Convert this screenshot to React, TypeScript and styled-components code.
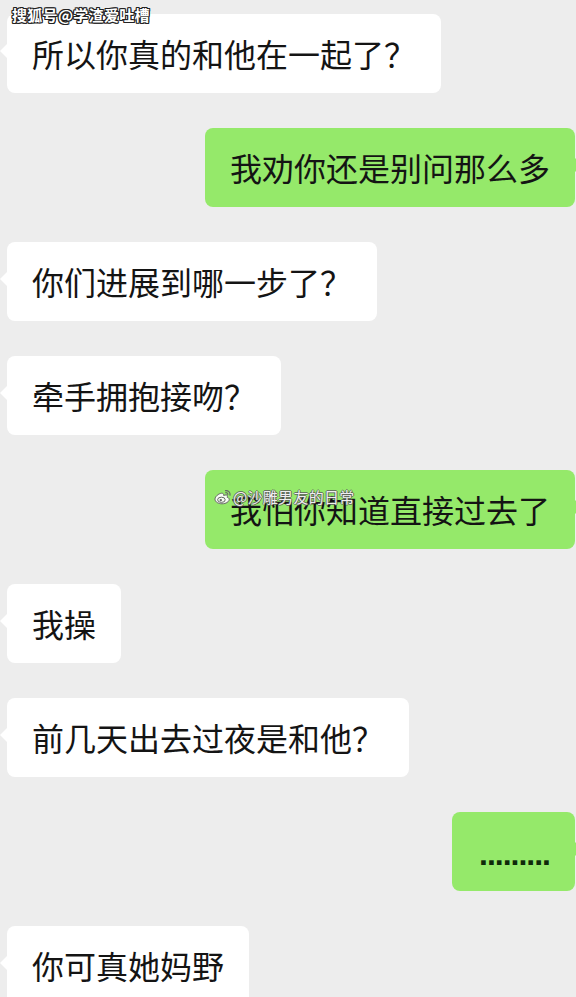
import React from "react";
import styled, { createGlobalStyle } from "styled-components";

const Global = createGlobalStyle`
  html, body { margin: 0; padding: 0; background: #ededed; }
  #root { width: 576px; height: 997px; overflow: hidden; }
`;

const Screen = styled.div`
  position: relative;
  width: 576px;
  height: 997px;
  overflow: hidden;
  background: #ededed;
  font-family: "Noto Sans CJK SC", "Noto Sans", sans-serif;
`;

const List = styled.div`
  display: flex;
  flex-direction: column;
  gap: 35px;
  padding-top: 14px;
`;

const Row = styled.div<{ $mine?: boolean }>`
  display: flex;
  justify-content: ${(p) => (p.$mine ? "flex-end" : "flex-start")};
  padding: ${(p) => (p.$mine ? "0 1px 0 0" : "0 0 0 7px")};
`;

const Bubble = styled.div<{ $mine?: boolean }>`
  position: relative;
  box-sizing: border-box;
  height: 79px;
  padding: 19px 25px;
  border-radius: 8px;
  background: ${(p) => (p.$mine ? "#95e96a" : "#ffffff")};
  color: #141414;
  font-size: 32px;
  line-height: 41px;
  white-space: nowrap;

  &::before {
    content: "";
    position: absolute;
    top: 30px;
    ${(p) => (p.$mine ? "right: -7px;" : "left: -7px;")}
    border-top: 7px solid transparent;
    border-bottom: 7px solid transparent;
    ${(p) =>
      p.$mine
        ? "border-left: 7px solid #95e96a;"
        : "border-right: 7px solid #ffffff;"}
  }
`;

const Dots = styled.span`
  font-family: "Liberation Sans", sans-serif;
  font-weight: 700;
  color: #0f2a0a;
  letter-spacing: -1px;
  padding-left: 2px;
`;

const TopMark = styled.div`
  position: absolute;
  left: 12px;
  top: 4px;
  font-size: 15px;
  line-height: 22px;
  font-weight: 700;
  letter-spacing: 0.3px;
  color: #ffffff;
  text-shadow: 1px 0 0 #222, -1px 0 0 #222, 0 1px 0 #222, 0 -1px 0 #222,
    1px 1px 0 #222, -1px -1px 0 #222, 1px -1px 0 #222, -1px 1px 0 #222;
`;

const MidMark = styled.div`
  position: absolute;
  left: 214px;
  top: 487px;
  display: flex;
  align-items: center;
  gap: 1px;
  font-size: 15px;
  line-height: 20px;
  letter-spacing: 0.3px;
  color: rgba(255, 255, 255, 0.92);
  text-shadow: 1px 0 0 rgba(90, 90, 90, 0.8), -1px 0 0 rgba(90, 90, 90, 0.8),
    0 1px 0 rgba(90, 90, 90, 0.8), 0 -1px 0 rgba(90, 90, 90, 0.8);
`;

const WeiboLogo = () => (
  <svg width="18" height="16" viewBox="0 0 18 16">
    <path
      d="M7.5 4.2C4.6 4.6 1 7.4 1 10.2c0 2.9 3.6 4.6 7 4.6 4.2 0 7.2-2.3 7.2-4.3 0-1.6-1.4-2-2.1-2.2.5-1 .6-2.3-.9-2.4-.9 0-2 .4-2.5.6.2-1-.4-2.5-2.2-2.3z"
      fill="rgba(255,255,255,0.92)"
      stroke="#666"
      strokeWidth="1"
    />
    <ellipse cx="7.4" cy="10.8" rx="3.8" ry="2.6" fill="none" stroke="#666" strokeWidth="1" />
    <circle cx="6.8" cy="11.1" r="1.2" fill="#666" />
    <path d="M11.5 1.6c2.6-.4 4.9 1.8 4.5 4.6" fill="none" stroke="#666" strokeWidth="1.2" strokeLinecap="round" />
    <path d="M11.8 3.6c1.2-.1 2.2.9 2 2.1" fill="none" stroke="#666" strokeWidth="1.1" strokeLinecap="round" />
  </svg>
);

type Msg = { text: string; mine?: boolean; dots?: boolean };

const messages: Msg[] = [
  { text: "所以你真的和他在一起了？" },
  { text: "我劝你还是别问那么多", mine: true },
  { text: "你们进展到哪一步了？" },
  { text: "牵手拥抱接吻？" },
  { text: "我怕你知道直接过去了", mine: true },
  { text: "我操" },
  { text: "前几天出去过夜是和他？" },
  { text: ".........", mine: true, dots: true },
  { text: "你可真她妈野" },
];

export default function App() {
  return (
    <Screen>
      <Global />
      <List>
        {messages.map((m, i) => (
          <Row key={i} $mine={m.mine}>
            <Bubble $mine={m.mine}>{m.dots ? <Dots>{m.text}</Dots> : m.text}</Bubble>
          </Row>
        ))}
      </List>
      <TopMark>搜狐号@学渣爱吐槽</TopMark>
      <MidMark>
        <WeiboLogo />
        <span>@沙雕男友的日常</span>
      </MidMark>
    </Screen>
  );
}
